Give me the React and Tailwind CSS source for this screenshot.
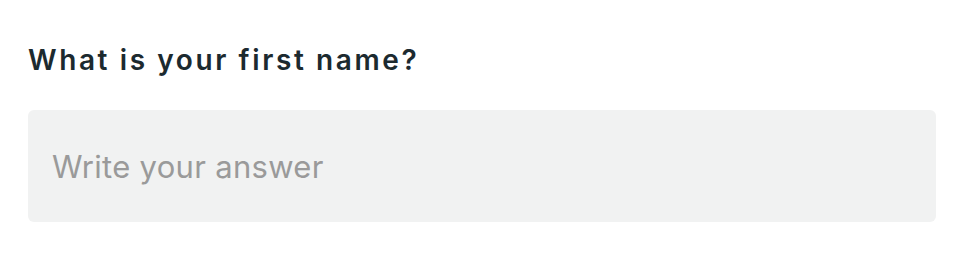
export default function App() {
  return (
    <div className="min-h-[272px] w-full bg-white px-[28px] pt-[41px]" style={{ fontFamily: 'Inter, sans-serif' }}>
      <label htmlFor="first-name" className="block text-[28px] font-semibold leading-[38px] tracking-[2.6px] text-[#1c2a2f]">
        What is your first name?
      </label>
      <div className="mt-[31px]">
        <input
          id="first-name"
          type="text"
          placeholder="Write your answer"
          className="block h-[112px] w-[908px] rounded-[6px] bg-[#f1f2f2] px-[24px] text-[31px] tracking-[0.3px] text-[#1c2a2f] outline-none placeholder:text-[#9a9a9a]"
        />
      </div>
    </div>
  );
}
